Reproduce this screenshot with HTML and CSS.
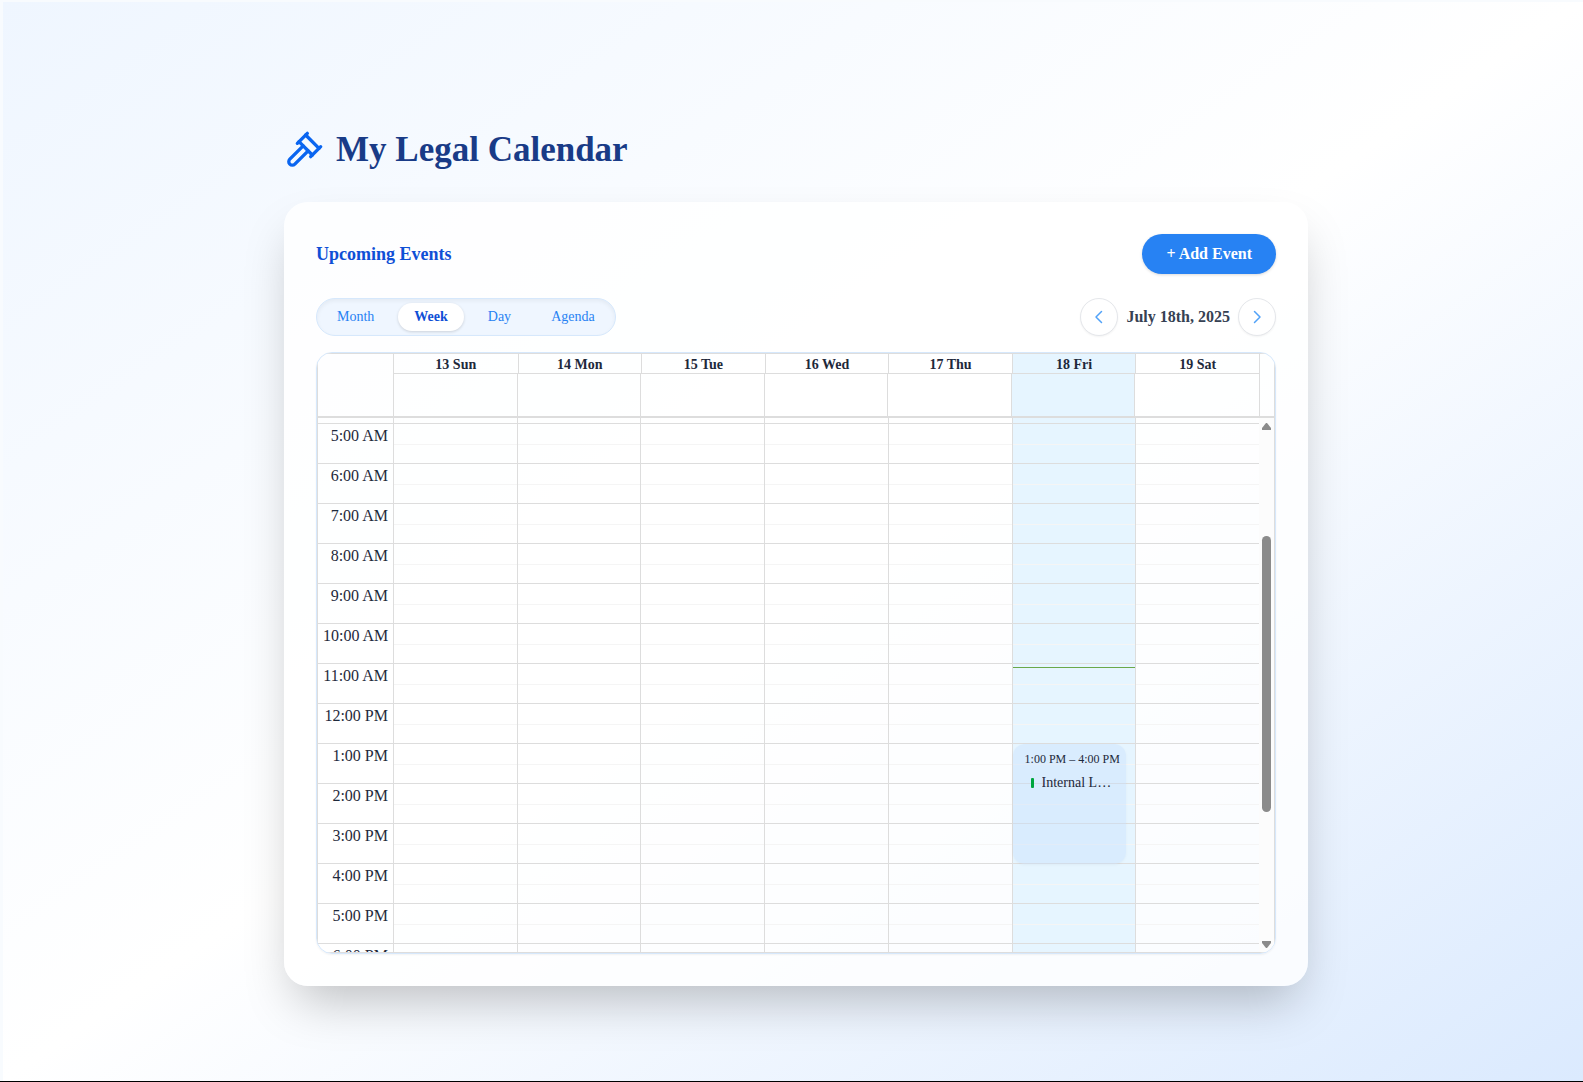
FILE: index.html
```html
<!DOCTYPE html>
<html lang="en">
<head>
<meta charset="utf-8">
<title>My Legal Calendar</title>
<link rel="stylesheet" href="styles.css">
</head>
<body>
<main class="page">
  <div class="container">
    <h1 class="title">
      <svg class="title-icon" viewBox="0 0 24 24" fill="none" stroke="currentColor" stroke-width="2" stroke-linecap="round" stroke-linejoin="round" aria-hidden="true"><path d="m14.500 12.500-8 8a2.119 2.119 0 1 1-3-3l8-8"/><path d="m16 16 6-6"/><path d="m8 8 6-6"/><path d="m9 7 8 8"/><path d="m21 11-8-8"/></svg>
      My Legal Calendar
    </h1>
    <section class="card">
      <header class="card-head">
        <h2 class="subtitle">Upcoming Events</h2>
        <button class="add" type="button">+ Add Event</button>
      </header>
      <div class="toolbar">
        <div class="views">
          <button class="view" type="button">Month</button>
          <button class="view view-active" type="button">Week</button>
          <button class="view" type="button">Day</button>
          <button class="view" type="button">Agenda</button>
        </div>
        <div class="nav">
          <button class="arrow" type="button" aria-label="Previous week"><svg viewBox="0 0 16 16" fill="none" stroke="currentColor" stroke-width="1.500" stroke-linecap="round" stroke-linejoin="round"><path d="M10.500 2.500 5 8l5.500 5.500"/></svg></button>
          <span class="date">July 18th, 2025</span>
          <button class="arrow" type="button" aria-label="Next week"><svg viewBox="0 0 16 16" fill="none" stroke="currentColor" stroke-width="1.500" stroke-linecap="round" stroke-linejoin="round"><path d="M5.500 2.500 11 8l-5.500 5.500"/></svg></button>
        </div>
      </div>
      <div class="calendar">
        <div class="week">
          <div class="week-head">
            <div class="head-gutter"></div>
            <div class="head-days">
              <div class="day-names">
                <div class="name">13 Sun</div><div class="name">14 Mon</div><div class="name">15 Tue</div><div class="name">16 Wed</div><div class="name">17 Thu</div><div class="name today">18 Fri</div><div class="name">19 Sat</div>
              </div>
              <div class="all-day">
                <div></div><div></div><div></div><div></div><div></div><div class="today"></div><div></div>
              </div>
            </div>
            <div class="head-end"></div>
          </div>
          <div class="week-body">
            <div class="times">
              <div class="hour"></div><div class="hour">5:00 AM</div><div class="hour">6:00 AM</div><div class="hour">7:00 AM</div><div class="hour">8:00 AM</div><div class="hour">9:00 AM</div><div class="hour">10:00 AM</div><div class="hour">11:00 AM</div><div class="hour">12:00 PM</div><div class="hour">1:00 PM</div><div class="hour">2:00 PM</div><div class="hour">3:00 PM</div><div class="hour">4:00 PM</div><div class="hour">5:00 PM</div><div class="hour">6:00 PM</div>
            </div>
            <div class="day"></div>
            <div class="day"></div>
            <div class="day"></div>
            <div class="day"></div>
            <div class="day"></div>
            <div class="day today">
              <div class="now"></div>
              <article class="event">
                <div class="event-time">1:00 PM – 4:00 PM</div>
                <div class="event-row"><span class="event-mark"></span><span class="event-name">Internal L…</span></div>
              </article>
            </div>
            <div class="day"></div>
            <div class="scroll">
              <svg class="scroll-arrow" viewBox="0 0 9 7" fill="currentColor"><path d="M4 0h1l4 5v2H0V5z"/></svg>
              <div class="track"><div class="thumb"></div></div>
              <svg class="scroll-arrow" viewBox="0 0 9 7" fill="currentColor"><path d="M0 0h9v2L5 7H4L0 2z"/></svg>
            </div>
          </div>
        </div>
      </div>
    </section>
  </div>
</main>
</body>
</html>
```
FILE: styles.css
```css
* { box-sizing: border-box; }
body {
  margin: 0;
  min-height: 100vh;
  display: flex;
  font-family: "Liberation Serif", "Times New Roman", serif;
  font-size: 16px;
  line-height: 24px;
  color: #1e293b;
  background: #f8fbfe;
  border-bottom: 1px solid #000;
}
button { font: inherit; border: 0; padding: 0; cursor: pointer; }
h1, h2 { margin: 0; }
.page {
  flex: 1;
  margin: 2px 0 0 3px;
  padding: 128px 16px 94px 22px;
  background: linear-gradient(to bottom right, #eff6ff, #ffffff, #dbeafe);
}
.container { max-width: 1024px; margin: 0 auto; }
.title {
  display: flex;
  align-items: center;
  gap: 12px;
  margin-bottom: 32px;
  font-size: 35px;
  line-height: 40px;
  color: #193b87;
}
.title-icon { width: 40px; height: 40px; color: #0a65f0; }
.card {
  padding: 32px;
  border-radius: 24px;
  background: rgba(255, 255, 255, 0.8);
  box-shadow: 0 25px 50px -12px rgba(0, 0, 0, 0.25);
}
.card-head { display: flex; justify-content: space-between; align-items: center; margin-bottom: 24px; }
.subtitle { font-size: 18px; line-height: 28px; color: #0f4fd6; }
.add {
  height: 40px;
  padding: 0 24px;
  border-radius: 20px;
  background: #2782f3;
  color: #fff;
  font-weight: bold;
  box-shadow: 0 1px 3px rgba(0, 0, 0, 0.15);
}
.toolbar { display: flex; justify-content: space-between; align-items: center; margin-bottom: 16px; }
.views {
  display: flex;
  gap: 8px;
  padding: 4px;
  border: 1px solid #d6e8fc;
  border-radius: 19px;
  background: #eff6ff;
  box-shadow: inset 0 2px 4px rgba(0, 0, 0, 0.05);
}
.view {
  height: 28px;
  padding: 0 16px;
  border-radius: 14px;
  background: transparent;
  color: #2782f3;
  font-size: 14px;
  line-height: 20px;
}
.view-active { background: #fff; color: #0f4fd6; font-weight: bold; box-shadow: 0 1px 3px rgba(0, 0, 0, 0.15); }
.nav { display: flex; align-items: center; gap: 8px; }
.arrow {
  width: 38px;
  height: 38px;
  display: grid;
  place-items: center;
  border: 1px solid #e5e7eb;
  border-radius: 50%;
  background: #fff;
  color: #51a2f8;
  box-shadow: 0 1px 2px rgba(0, 0, 0, 0.05);
}
.arrow svg { width: 16px; height: 16px; }
.date { font-weight: bold; color: #364153; }
.calendar {
  height: 602px;
  overflow: hidden;
  border: 1px solid #d6e8fc;
  border-radius: 16px;
  box-shadow: 0 1px 2px rgba(0, 0, 0, 0.05);
}
.week { height: 100%; display: flex; flex-direction: column; border: 1px solid #ddd; }
.week-head { display: flex; border-bottom: 2px solid #ddd; }
.head-gutter { width: 76px; border-right: 1px solid #ddd; }
.head-days { flex: 1; }
.head-end { width: 15px; border-left: 1px solid #ddd; }
.day-names, .all-day { display: grid; grid-template-columns: repeat(7, 1fr); }
.name {
  height: 20px;
  border-bottom: 1px solid #ddd;
  text-align: center;
  font-size: 14px;
  line-height: 22px;
  font-weight: bold;
}
.name + .name { border-left: 1px solid #ddd; }
.all-day { height: 42px; }
.all-day > :not(:last-child) { border-right: 1px solid #ddd; }
.today { background-color: #e6f5ff; }
.week-body {
  flex: 1;
  min-height: 0;
  overflow: hidden;
  display: grid;
  grid-template-columns: 75px repeat(7, 1fr) 15px;
}
.times { height: 0; }
.hour { height: 40px; padding: 0 5px; border-bottom: 1px solid #ddd; text-align: right; white-space: nowrap; }
.hour:first-child { height: 6px; }
.day {
  position: relative;
  border-left: 1px solid #ddd;
  background-image:
    linear-gradient(#ddd 1px, transparent 1px),
    linear-gradient(#f5f5f5 1px, transparent 1px);
  background-size: 100% 40px;
  background-position: 0 5px, 0 26px;
}
.now { position: absolute; z-index: 2; top: 249px; left: 0; right: 0; height: 1px; background: #6aa84a; }
.event {
  position: absolute;
  top: 326px;
  left: 0;
  width: 113px;
  height: 120px;
  padding: 5px 4px 5px 12px;
  border-radius: 12px;
  background: rgba(198, 222, 253, 0.4);
  box-shadow: 0 1px 3px rgba(0, 0, 0, 0.04);
}
.event-time { font-size: 12px; line-height: 20px; white-space: nowrap; }
.event-row { display: flex; align-items: center; gap: 8px; margin-top: 4px; padding-left: 6px; font-size: 14px; line-height: 20px; }
.event-mark { flex: none; width: 3px; height: 10px; border-radius: 1px; background: #00a63e; }
.event-name { overflow: hidden; text-overflow: ellipsis; white-space: nowrap; }
.scroll { display: flex; flex-direction: column; align-items: center; padding: 5px 0 4px; background: #fcfcfc; color: #8b8b8b; }
.scroll-arrow { width: 9px; height: 7px; }
.track { flex: 1; padding-top: 106px; }
.thumb { width: 9px; height: 276px; border-radius: 5px; background: #8b8b8b; }
```
